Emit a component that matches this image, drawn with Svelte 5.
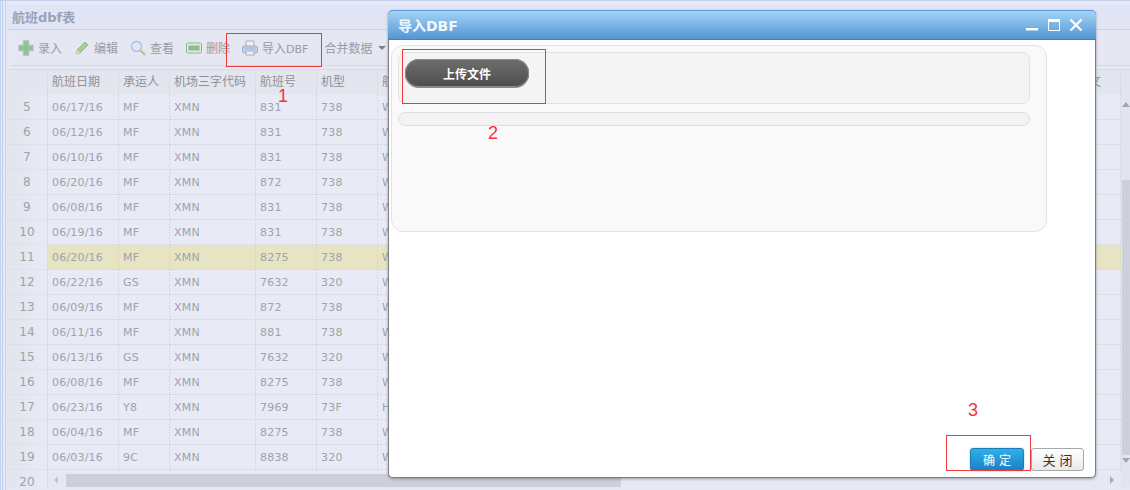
<script>
  const cols = ["航班日期", "承运人", "机场三字代码", "航班号", "机型", "航", "文"];
  const rows = [
    [5, "06/17/16", "MF", "XMN", "831", "738", "W"],
    [6, "06/12/16", "MF", "XMN", "831", "738", "W"],
    [7, "06/10/16", "MF", "XMN", "831", "738", "W"],
    [8, "06/20/16", "MF", "XMN", "872", "738", "W"],
    [9, "06/08/16", "MF", "XMN", "831", "738", "W"],
    [10, "06/19/16", "MF", "XMN", "831", "738", "W"],
    [11, "06/20/16", "MF", "XMN", "8275", "738", "W"],
    [12, "06/22/16", "GS", "XMN", "7632", "320", "W"],
    [13, "06/09/16", "MF", "XMN", "872", "738", "W"],
    [14, "06/11/16", "MF", "XMN", "881", "738", "W"],
    [15, "06/13/16", "GS", "XMN", "7632", "320", "W"],
    [16, "06/08/16", "MF", "XMN", "8275", "738", "W"],
    [17, "06/23/16", "Y8", "XMN", "7969", "73F", "H"],
    [18, "06/04/16", "MF", "XMN", "8275", "738", "W"],
    [19, "06/03/16", "9C", "XMN", "8838", "320", "W"],
    [20, "", "", "", "", "", ""]
  ];
</script>

<div class="page">
  <div class="panel">
    <div class="title">航班dbf表</div>
    <div class="toolbar">
      <span class="tool">
        <svg width="16" height="16" viewBox="0 0 16 16">
          <path d="M5.5 1h5v4.5H15v5h-4.5V15h-5v-4.5H1v-5h4.5z" fill="#8fc29a" stroke="#a9c4b0" stroke-width="1.4" stroke-linejoin="round" />
        </svg>
        录入
      </span>
      <span class="tool">
        <svg width="16" height="16" viewBox="0 0 16 16">
          <path d="M2 14l1-4 8-8 3 3-8 8z" fill="#a5cf92" stroke="#9db596" />
          <path d="M2 14l1-4 3 3z" fill="#e3dcc4" />
        </svg>
        编辑
      </span>
      <span class="tool">
        <svg width="16" height="16" viewBox="0 0 16 16">
          <circle cx="6.5" cy="6.5" r="5" fill="#dfe8f8" stroke="#a9bfdc" stroke-width="1.3" />
          <path d="M10.5 10.5l4.5 4.5" stroke="#c9b98e" stroke-width="2.4" />
        </svg>
        查看
      </span>
      <span class="tool">
        <svg width="16" height="16" viewBox="0 0 16 16">
          <rect x="0.5" y="3" width="15" height="10" rx="1.5" fill="#dcebdc" stroke="#8fb398" />
          <rect x="2.5" y="5.5" width="11" height="5" fill="#8dbb8f" />
        </svg>
        删除
      </span>
      <span class="tool">
        <svg width="16" height="16" viewBox="0 0 16 16">
          <path d="M4 6V1h8v5" fill="#eef0f6" stroke="#a9afbf" />
          <rect x="0.5" y="6" width="15" height="7" rx="2" fill="#c6d2e6" stroke="#a3adc1" />
          <rect x="2" y="7" width="12" height="2.5" fill="#a5c8ec" />
          <rect x="4" y="11" width="8" height="4" fill="#eef0f6" stroke="#a9afbf" />
        </svg>
        <span>导入<span class="latin">DBF</span></span>
      </span>
      <span class="tool merge">合并数据<i class="caret"></i></span>
    </div>

    <div class="grid-wrap">
      <div class="grid">
        <div class="row head">
          <div class="cell num"></div>
          {#each cols as c}
            <div class="cell">{c}</div>
          {/each}
        </div>
        {#each rows as r}
          <div class="row" class:picked={r[0] === 11}>
            <div class="cell num">{r[0]}</div>
            {#each r.slice(1) as v}
              <div class="cell">{v}</div>
            {/each}
            <div class="cell"></div>
          </div>
        {/each}
        <div class="hscroll">
          <i class="arrow-left"></i>
          <div class="hthumb"></div>
          <i class="arrow-right"></i>
        </div>
      </div>
      <div class="vscroll">
        <i class="arrow-up"></i>
        <div class="vthumb"></div>
        <i class="arrow-down"></i>
      </div>
    </div>
  </div>

  <div class="dialog">
    <div class="dialog-head">
      <span>导入DBF</span>
      <div class="win-btns">
        <svg width="14" height="14" viewBox="0 0 14 14"><rect x="1" y="10" width="12" height="2.4" fill="#fff" /></svg>
        <svg width="14" height="14" viewBox="0 0 14 14">
          <rect x="1.5" y="1.5" width="11" height="11" fill="none" stroke="#fff" />
          <rect x="1" y="1" width="12" height="3" fill="#fff" />
        </svg>
        <svg width="14" height="14" viewBox="0 0 14 14"><path d="M1.5 1.5l11 11M12.5 1.5l-11 11" stroke="#fff" stroke-width="2.2" /></svg>
      </div>
    </div>
    <div class="dialog-body">
      <div class="outer">
        <div class="upload-box">
          <button class="upload">上传文件</button>
        </div>
        <div class="progress"></div>
      </div>
    </div>
    <div class="dialog-foot">
      <button class="ok">确 定</button>
      <button class="close">关 闭</button>
    </div>
  </div>

  <div class="mark box1"></div>
  <div class="mark box2"></div>
  <div class="mark box3"></div>
  <span class="num-mark n1">1</span>
  <span class="num-mark n2">2</span>
  <span class="num-mark n3">3</span>
</div>

<style>
  :global(body) {
    margin: 0;
    background: #e2e5f3;
  }

  .page {
    position: relative;
    width: 1130px;
    height: 490px;
    overflow: hidden;
    font-family: "DejaVu Sans", "Noto Sans CJK SC", sans-serif;
    font-size: 11px;
    color: #a0a2aa;
  }

  .panel {
    box-sizing: border-box;
    height: 490px;
    padding: 3px 0 3px 7px;
    border-top: 1px solid #c4d0ec;
    background: linear-gradient(to right, #c3d3f0 0 1px, #e6ebf8 1px 2px, #bccff0 2px 3px, #e6ebf8 3px 5px, #c5d3ee 5px 6px, #e6e8f4 6px);
    display: flex;
    flex-direction: column;
  }

  .title {
    height: 25px;
    line-height: 27px;
    padding-left: 5px;
    font-size: 13px;
    font-weight: bold;
    color: #99a3b7;
    background: #e1e5f6;
    border-bottom: 1px solid #cfd3e2;
    flex: none;
  }

  .toolbar {
    height: 35px;
    margin-left: 3px;
    padding-left: 8px;
    display: flex;
    align-items: center;
    gap: 12px;
    background: #e5e7f2;
    border-bottom: 1px solid #d5d7e1;
    font-size: 12px;
    flex: none;
  }

  .tool {
    display: flex;
    align-items: center;
    gap: 4px;
    white-space: nowrap;
    color: #9a9ca4;
  }

  .latin {
    font-size: 11px;
  }

  .merge {
    margin-left: 4px;
    gap: 6px;
  }

  .caret {
    width: 0;
    height: 0;
    border: 4px solid transparent;
    border-top: 4px solid #7e8088;
    border-bottom: 0;
  }

  .grid-wrap {
    flex: 1;
    min-height: 0;
    margin-top: 3px;
    display: flex;
    overflow: hidden;
    border-top: 1px solid #d8dae4;
  }

  .grid {
    position: relative;
    width: 1114px;
    flex: none;
  }

  .row {
    display: grid;
    grid-template-columns: 41px 71px 51px 86px 61px 61px 707px 36px;
    height: 25px;
    box-sizing: border-box;
    background: #e8ebf5;
  }

  .row.head {
    background: #e3e5ef;
    font-size: 12px;
    color: #8f9198;
  }

  .row.picked .cell:not(.num) {
    background: #e6e4c3;
  }

  .cell {
    box-sizing: border-box;
    padding: 0 4px;
    line-height: 25px;
    letter-spacing: 0.2px;
    border-right: 1px dotted #d0d3dc;
    border-bottom: 1px dotted #d0d3dc;
    white-space: nowrap;
    overflow: hidden;
  }

  .cell.num {
    text-align: center;
    font-size: 12px;
    background: linear-gradient(to right, #e2e4ee, #e8ebf5);
    border-bottom-color: #d8dae3;
  }

  .head .cell {
    border-bottom: 0;
    letter-spacing: 0;
  }

  .head .cell.num {
    background: none;
  }

  .hscroll {
    position: absolute;
    left: 41px;
    right: 0;
    top: 402px;
    height: 14px;
    padding-top: 1px;
    display: flex;
    align-items: center;
    background: #e6e8f2;
  }

  .hthumb {
    width: 555px;
    height: 13px;
    margin-left: 8px;
    margin-right: auto;
    background: #cdd0da;
  }

  .arrow-left,
  .arrow-right {
    width: 0;
    height: 0;
    border: 4px solid transparent;
  }

  .arrow-left {
    margin-left: 6px;
    border-right: 4px solid #c4c6cf;
    border-left: 0;
  }

  .arrow-right {
    margin-right: 7px;
    border-left: 4px solid #a9abb4;
    border-right: 0;
  }

  .vscroll {
    flex: 1;
    padding-top: 32px;
    box-sizing: border-box;
    background: #e2e4f0;
    display: flex;
    flex-direction: column;
    align-items: flex-end;
  }

  .vthumb {
    width: 8px;
    height: 275px;
    margin-top: 73px;
    background: #cdd0da;
  }

  .arrow-up,
  .arrow-down {
    width: 0;
    height: 0;
    border: 4px solid transparent;
  }

  .arrow-up {
    border-bottom: 5px solid #a3a5ae;
    border-top: 0;
  }

  .arrow-down {
    margin-top: 3px;
    border-top: 5px solid #a3a5ae;
    border-bottom: 0;
  }

  .dialog {
    position: absolute;
    left: 388px;
    top: 10px;
    width: 708px;
    height: 468px;
    box-sizing: border-box;
    display: flex;
    flex-direction: column;
    background: #fff;
    border-radius: 5px;
    border-right: 1px solid #7d7f85;
    border-left: 1px solid #7d7f85;
    border-bottom: 1px solid #7d7f85;
    box-shadow: 0 1px 3px rgba(60, 60, 70, 0.45);
  }

  .dialog-head {
    height: 30px;
    margin: 0 -1px;
    box-sizing: border-box;
    padding: 0 13px 0 10px;
    display: flex;
    align-items: center;
    justify-content: space-between;
    border-radius: 5px 5px 0 0;
    border-top: 1px solid #5a9be0;
    border-bottom: 1px solid #3f85c8;
    background: linear-gradient(to bottom, #a3d3f6, #5396d4);
    color: #f2f8fe;
    font-size: 14px;
    font-weight: bold;
    flex: none;
  }

  .win-btns {
    display: flex;
    gap: 8px;
  }

  .dialog-body {
    flex: 1;
    padding: 5px 0 0 2px;
  }

  .outer {
    box-sizing: border-box;
    width: 656px;
    height: 187px;
    padding: 6px 16px 0 6px;
    background: #f9f9f9;
    border: 1px solid #e3e3e3;
    border-radius: 12px;
  }

  .upload-box {
    box-sizing: border-box;
    height: 52px;
    padding: 6px;
    background: #f4f4f4;
    border: 1px solid #e2e2e2;
    border-radius: 8px;
  }

  .upload {
    display: block;
    width: 124px;
    height: 29px;
    padding: 0;
    border: 0;
    border-bottom: 1px solid #888;
    border-radius: 14px;
    background: linear-gradient(to bottom, #6f6f6f, #4c4c4c);
    box-shadow: 0 0 0 1px #8a8a8a inset;
    color: #fff;
    font-family: inherit;
    font-size: 12px;
    font-weight: bold;
  }

  .progress {
    height: 14px;
    margin-top: 8px;
    box-sizing: border-box;
    background: #f3f3f3;
    border: 1px solid #dedede;
    border-radius: 7px;
  }

  .dialog-foot {
    flex: none;
    height: 30px;
    padding: 0 11px 6px 0;
    box-sizing: border-box;
    display: flex;
    justify-content: flex-end;
    align-items: flex-end;
    gap: 7px;
  }

  .ok,
  .close {
    box-sizing: border-box;
    height: 23px;
    padding: 0;
    border-radius: 3px;
    font-family: inherit;
    font-size: 12px;
  }

  .ok {
    width: 54px;
    border: 1px solid #1c7cb8;
    background: linear-gradient(to bottom, #2fb0ea, #1c80c4);
    box-shadow: 0 0 2px #8cc8ee;
    color: #fff;
  }

  .close {
    width: 53px;
    border: 1px solid #a9a9a9;
    background: linear-gradient(to bottom, #ffffff, #e9e9e9);
    color: #333;
    font-size: 13px;
  }

  .mark {
    position: absolute;
    box-sizing: border-box;
    border: 1px solid #f03a3a;
  }

  .box1 {
    left: 226px;
    top: 33px;
    width: 96px;
    height: 34px;
  }

  .box2 {
    left: 402px;
    top: 49px;
    width: 144px;
    height: 55px;
  }

  .box3 {
    left: 946px;
    top: 435px;
    width: 85px;
    height: 36px;
  }

  .num-mark {
    position: absolute;
    font-family: "Liberation Sans", sans-serif;
    font-size: 18px;
    line-height: 18px;
    color: #f5333f;
  }

  .n1 {
    left: 278px;
    top: 87px;
  }

  .n2 {
    left: 488px;
    top: 124px;
  }

  .n3 {
    left: 968px;
    top: 401px;
  }
</style>
